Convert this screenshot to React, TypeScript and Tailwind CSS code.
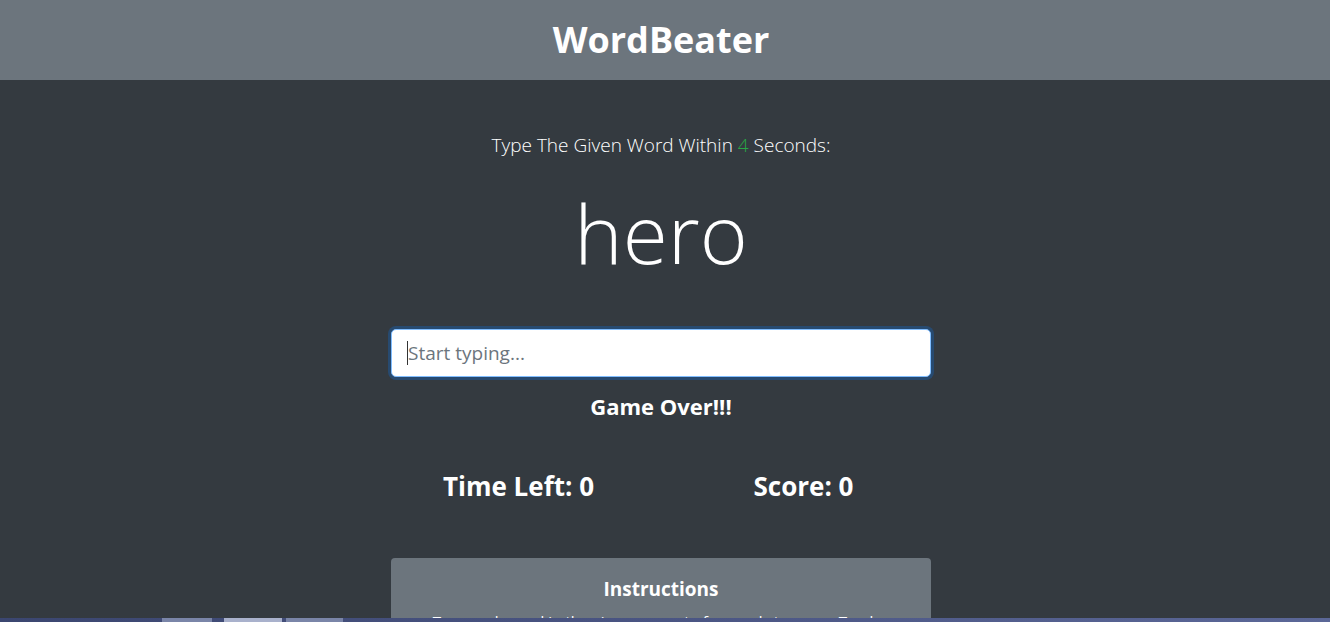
import { useState } from 'react';

const FONT = 'font-["Open_Sans","Noto_Sans",sans-serif]';

export default function App() {
  const [value, setValue] = useState('');

  return (
    <div className={`min-h-screen bg-[#343a40] text-white ${FONT}`}>
      <header className="h-20 bg-[#6c757d] flex items-center justify-center pr-2">
        <h1 className="text-[36px] font-bold leading-none">WordBeater</h1>
      </header>

      <main className="pr-2">
        <div className="w-[570px] mx-auto">
          <p className="mt-[50px] text-center text-[19px] font-light leading-[30px]">
            Type The Given Word Within <span className="text-[#28a745]">4</span> Seconds:
          </p>
          <h2 className="mt-[20px] text-center text-[82px] font-light leading-[105.6px]">hero</h2>

          <div className="px-[15px] mt-[43px]">
            <div className="relative">
              <input
                autoFocus
                value={value}
                onChange={(e) => setValue(e.target.value)}
                placeholder="Start typing..."
                className="w-full h-12 px-4 rounded-[5px] bg-white text-[#495057] text-[19px] border border-[#80bdff] shadow-[0_0_0_3px_rgba(0,123,255,0.25)] outline-none placeholder-[#6c757d]"
              />
              {value === '' && (
                <span className="absolute left-[16px] top-[12px] w-px h-[24px] bg-[#333]" />
              )}
            </div>
            <h4 className="mt-[16px] text-center text-[22px] font-bold leading-[1.2]">Game Over!!!</h4>
          </div>

          <div className="grid grid-cols-2 mt-[52px]">
            <h3 className="text-center text-[26px] font-bold leading-[1.2]">Time Left: 0</h3>
            <h3 className="text-center text-[26px] font-bold leading-[1.2]">Score: 0</h3>
          </div>

          <div className="px-[15px] mt-[56px] pb-10">
            <div className="bg-[#6c757d] rounded-[4px] p-5 text-center">
              <h5 className="text-[19px] font-bold leading-[1.2] mb-2">Instructions</h5>
              <p className="text-[15.2px] leading-6">
                Type each word in the given amount of seconds to score. To play again, just type the current word. Your
                score will reset.
              </p>
            </div>
          </div>
        </div>
      </main>

      <div className="fixed bottom-0 left-0 right-0 h-[4px] bg-gradient-to-r from-[#3b4670] via-[#4a5583] to-[#5b6797]">
        <div className="flex h-full">
          <div className="w-[162px]" />
          <div className="w-[50px] bg-[#7a85a8]" />
          <div className="w-[12px]" />
          <div className="w-[58px] bg-[#a9b1cc]" />
          <div className="w-[4px]" />
          <div className="w-[57px] bg-[#7a85a8]" />
        </div>
      </div>
    </div>
  );
}
